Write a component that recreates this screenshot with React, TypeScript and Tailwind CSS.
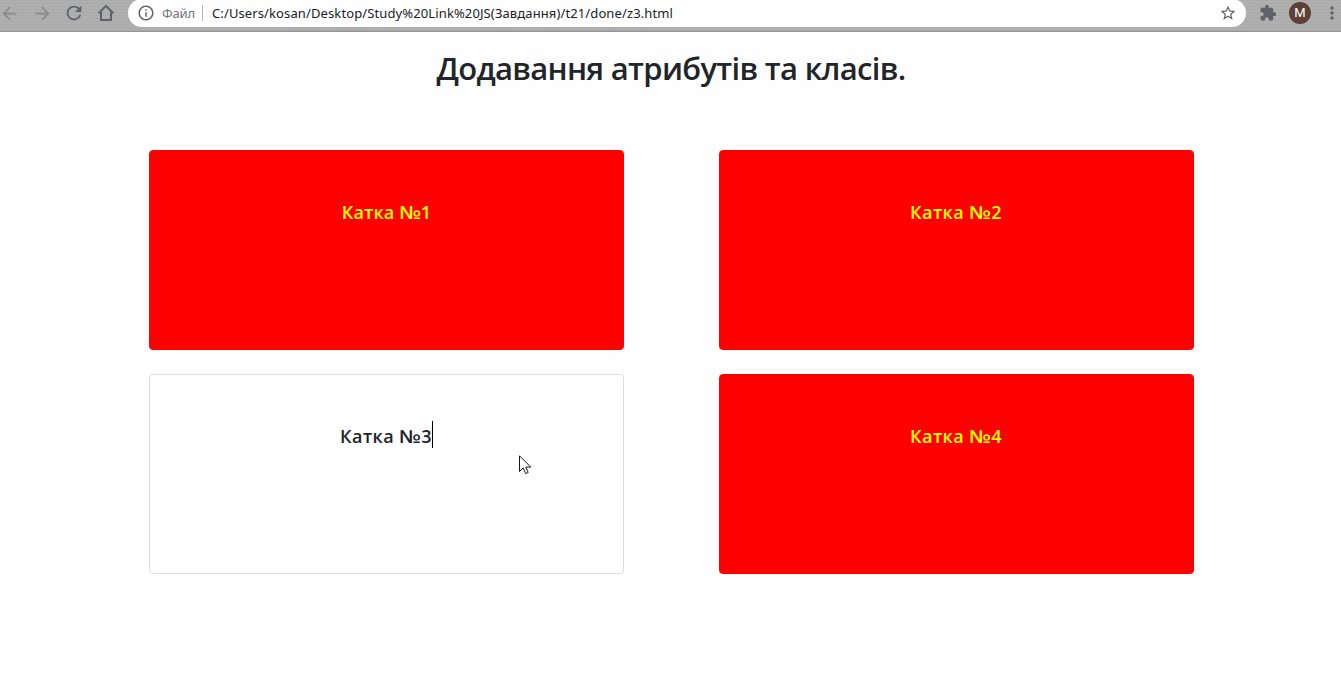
import {
  MdArrowBack,
  MdArrowForward,
  MdRefresh,
  MdInfoOutline,
  MdStarBorder,
  MdExtension,
  MdMoreVert,
} from "react-icons/md";

function Toolbar() {
  return (
    <header className="flex h-8 items-start overflow-hidden border-b border-[#969696] bg-[#adadad] bg-[repeating-linear-gradient(0deg,#aaaaaa_0px,#aaaaaa_1px,#afafaf_1px,#afafaf_3px)] text-[#5f6368]">
      <div className="flex h-[26px] w-32 shrink-0 items-center">
        <span className="flex w-[26px] justify-start text-[#8a8c8e]">
          <MdArrowBack size={21} className="-ml-px shrink-0" />
        </span>
        <span className="flex w-8 justify-center text-[#8a8c8e]">
          <MdArrowForward size={21} className="shrink-0" />
        </span>
        <span className="flex w-8 justify-center">
          <MdRefresh size={22} className="shrink-0" />
        </span>
        <span className="flex w-8 justify-center">
          <svg width="18" height="18" viewBox="0 0 18 18" fill="none" stroke="currentColor" strokeWidth="2">
            <path d="M1.6 9.3 9 1.9l7.4 7.4M4 8v8h10V8" />
          </svg>
        </span>
      </div>
      <div className="-mt-px flex h-7 w-[1118px] shrink-0 items-center rounded-[14px] bg-white px-[9px] font-['Noto_Sans','Open_Sans',sans-serif] text-[13px]">
        <MdInfoOutline size={18} className="shrink-0" />
        <span className="ml-[7px] w-[33px] whitespace-nowrap pt-0.5 tracking-[-0.15px] text-[#6f7377]">Файл</span>
        <span className="ml-[7px] h-4 w-px bg-[#b4b6b8]" />
        <span className="ml-[9px] whitespace-nowrap pt-0.5 tracking-[0.115px] text-[#202124]">
          C:/Users/kosan/Desktop/Study%20Link%20JS(Завдання)/t21/done/z3.html
        </span>
        <MdStarBorder size={18} className="ml-auto shrink-0" />
      </div>
      <div className="flex h-[26px] w-[95px] shrink-0 items-center pl-[13px]">
        <MdExtension size={18} className="shrink-0" />
        <span className="ml-3 flex size-[22px] shrink-0 items-center justify-center rounded-full bg-[#5d4037] font-['Roboto',sans-serif] text-[13px] text-white">
          M
        </span>
        <MdMoreVert size={20} className="ml-[11px] shrink-0" />
      </div>
    </header>
  );
}

function Card({ number, active, caret }: { number: number; active?: boolean; caret?: boolean }) {
  return (
    <div
      className={
        "flex h-[200px] w-[475px] justify-center rounded-[4px] border pt-12 " +
        (active ? "border-[#f00] bg-[#f00] text-[#ff0]" : "border-[#dfdfdf] bg-white text-[#212529]")
      }
    >
      <h2
        className={
          "relative h-[27px] whitespace-pre text-[18px] font-semibold leading-[27px] " +
          (number === 1 ? "tracking-[0.15px]" : "mr-px tracking-[0.45px]")
        }
      >
        Катка <span className="mx-[1.5px] inline-block scale-x-120">№</span>
        <span>{number}</span>
        {caret && <span className="absolute -right-px -top-0.5 h-[27px] w-px bg-black" />}
      </h2>
    </div>
  );
}

export default function App() {
  return (
    <div className="h-[677px] w-[1341px] overflow-hidden bg-[#fefefe] font-['Open_Sans','Noto_Sans',sans-serif]">
      <Toolbar />
      <main className="relative">
        <h1 className="mt-[17px] pl-px text-center text-[31px] font-[570] leading-[38px] tracking-[-0.68px] text-[#212529]">
          Додавання атрибутів та класів.
        </h1>
        <div className="ml-[149px] mt-[63px] grid w-[1045px] grid-cols-[475px_475px] justify-between gap-y-6">
          <Card number={1} active />
          <Card number={2} active />
          <Card number={3} caret />
          <Card number={4} active />
        </div>
        <svg className="absolute left-[519px] top-[406px]" width="13" height="20" viewBox="0 0 13 20">
          <path
            d="M.5.8v15.7l3.7-3.5 2.5 5.6 2.5-1.1-2.4-5.4h5z"
            fill="white"
            stroke="#15151f"
            strokeWidth="1"
          />
        </svg>
      </main>
    </div>
  );
}
